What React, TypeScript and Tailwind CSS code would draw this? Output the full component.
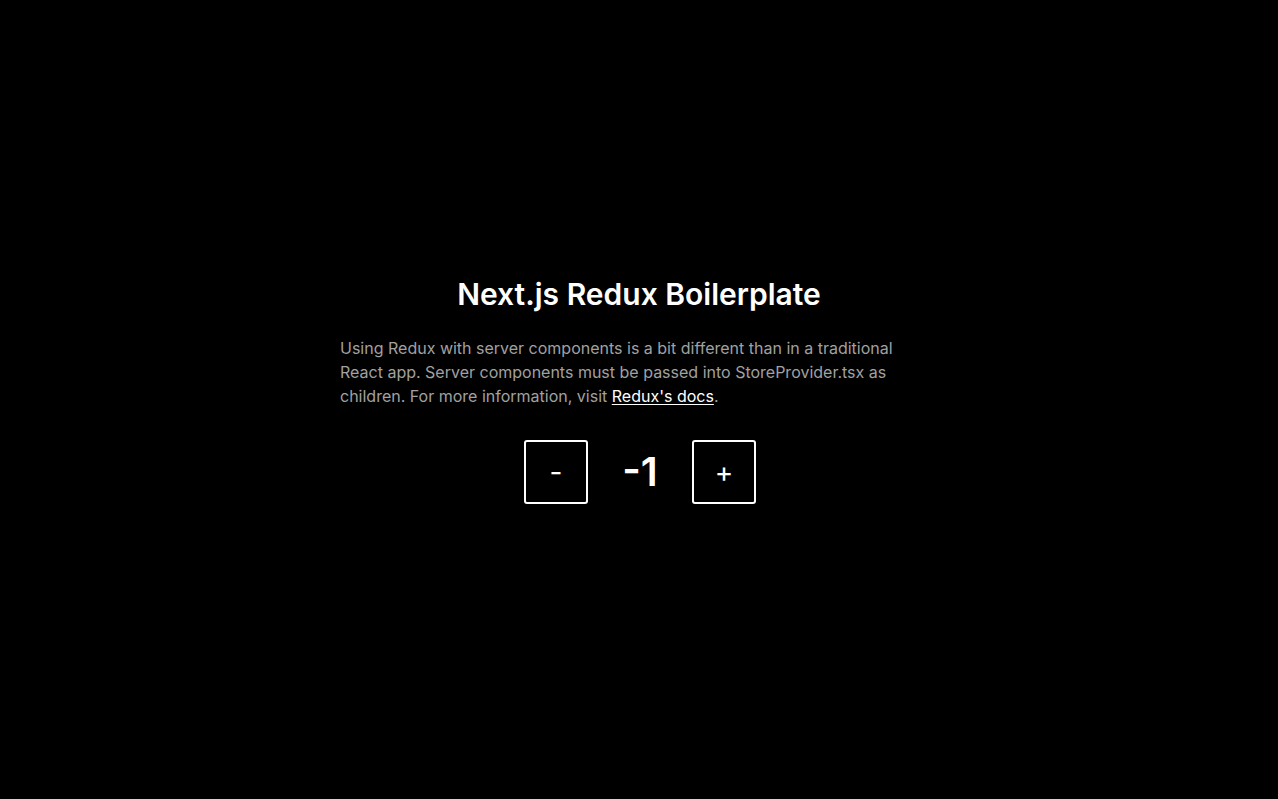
import { useState } from "react";

export default function App() {
  const [count, setCount] = useState(-1);

  return (
    <main className="min-h-screen bg-black flex flex-col items-center justify-center pb-[19px] font-['Inter',sans-serif] text-white">
      <h1 className="text-[30px] leading-9 font-semibold">Next.js Redux Boilerplate</h1>
      <p className="mt-6 w-[598px] text-base leading-6 text-neutral-400">
        Using Redux with server components is a bit different than in a traditional React app. Server components must be
        passed into StoreProvider.tsx as children. For more information, visit{" "}
        <a href="#" className="text-white underline underline-offset-2">
          Redux's docs
        </a>
        .
      </p>
      <div className="mt-8 pl-[2px] flex items-center">
        <button
          onClick={() => setCount((c) => c - 1)}
          className="w-16 h-16 border-2 border-white rounded-[3px] text-[28px] leading-none flex items-center justify-center"
        >
          -
        </button>
        <span className="w-[104px] text-center text-[40px] leading-none font-semibold">{count}</span>
        <button
          onClick={() => setCount((c) => c + 1)}
          className="w-16 h-16 border-2 border-white rounded-[3px] text-[28px] leading-none flex items-center justify-center"
        >
          +
        </button>
      </div>
    </main>
  );
}
